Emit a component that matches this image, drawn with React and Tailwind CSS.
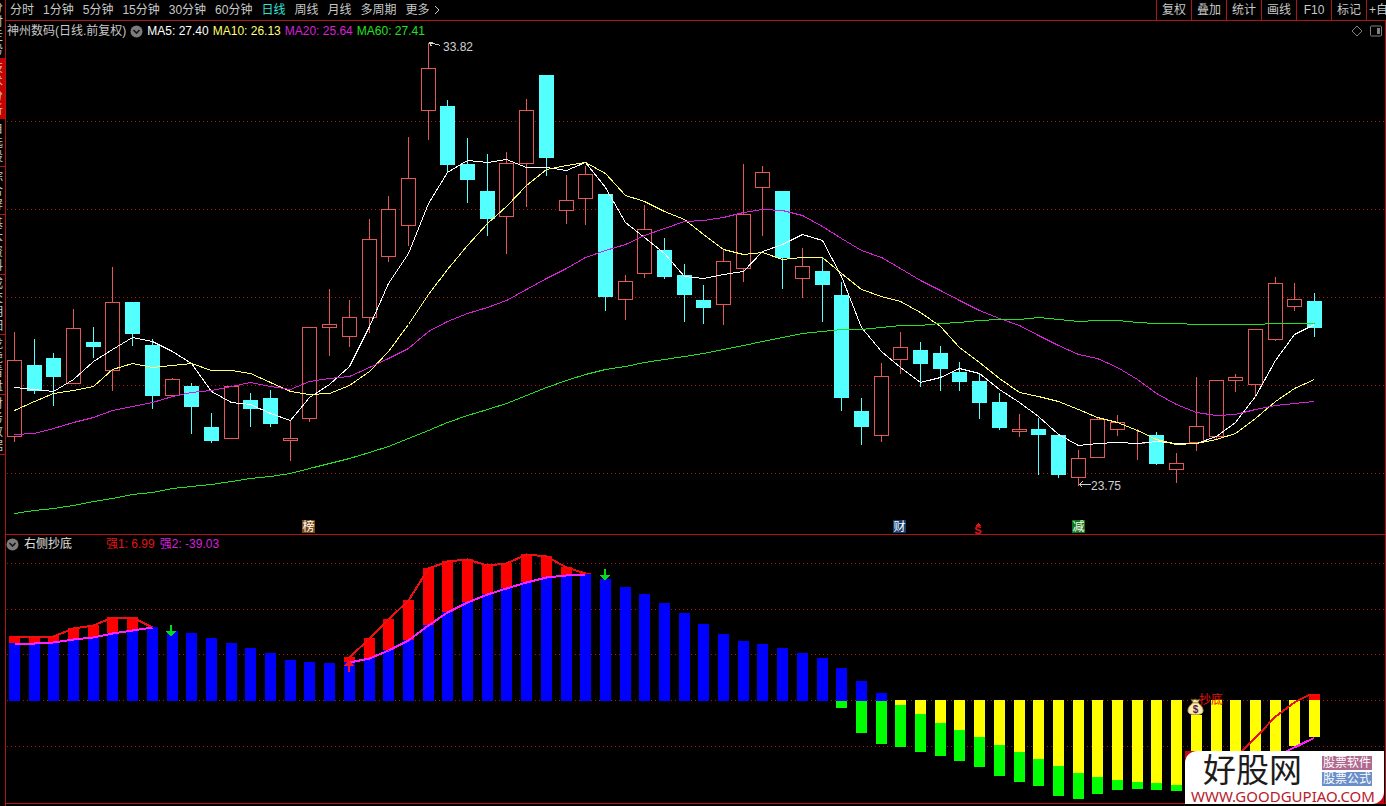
import { useState } from 'react'

const PERIODS = ['分时', '1分钟', '5分钟', '15分钟', '30分钟', '60分钟', '日线', '周线', '月线', '多周期']
const TOOLS = ['复权', '叠加', '统计', '画线', 'F10', '标记']

const SIDE_TABS = [
  { label: '分时走势', cls: 'h-[58px]' },
  { label: '技术分析', cls: 'h-[61px] bg-[#c80000]' },
  { label: '自选股', cls: 'h-[48px] border-b' },
  { label: '综合屏', cls: 'h-[48px] border-b' },
  { label: '基本资料', cls: 'h-[60px] border-b' },
  { label: '成交明细', cls: 'h-[60px] border-b' },
  { label: '龙虎看盘', cls: 'h-[60px] border-b' },
  { label: '财务数据', cls: 'h-[60px] border-b' },
]

// [high, body top, body bottom, low, 1 = up / 0 = down], chart y coordinates
const CANDLES = [
  [332, 360, 436, 442, 1], [339, 365, 391, 394, 0], [353, 358, 377, 406, 0], [309, 328, 383, 384, 1],
  [327, 342, 347, 358, 0], [267, 302, 370, 391, 1], [302, 302, 334, 346, 0], [339, 345, 396, 409, 0],
  [378, 379, 395, 397, 1], [383, 386, 407, 434, 0], [413, 427, 441, 443, 0], [386, 386, 438, 438, 1],
  [393, 400, 409, 427, 0], [390, 398, 424, 427, 0], [421, 438, 440, 461, 1], [327, 327, 418, 422, 1],
  [289, 324, 327, 356, 1], [300, 317, 336, 347, 1], [219, 239, 317, 333, 1], [196, 209, 256, 262, 1],
  [137, 178, 225, 246, 1], [43, 68, 110, 140, 1], [100, 106, 165, 172, 0], [138, 164, 180, 203, 0],
  [154, 191, 219, 236, 0], [152, 163, 216, 254, 1], [99, 110, 163, 207, 1], [75, 75, 158, 176, 0],
  [175, 200, 210, 224, 1], [166, 174, 198, 225, 1], [194, 194, 297, 311, 0], [275, 281, 299, 320, 1],
  [205, 229, 273, 278, 1], [238, 250, 277, 279, 0], [264, 275, 295, 322, 0], [285, 300, 308, 324, 0],
  [250, 261, 304, 325, 1], [164, 214, 268, 282, 1], [166, 172, 187, 236, 1], [191, 191, 258, 289, 0],
  [248, 266, 278, 298, 1], [257, 271, 285, 322, 0], [282, 295, 398, 411, 0], [398, 411, 427, 445, 0],
  [363, 376, 435, 442, 1], [332, 347, 359, 374, 1], [342, 350, 364, 387, 0], [346, 353, 369, 391, 0],
  [362, 372, 382, 391, 0], [373, 381, 403, 419, 0], [393, 402, 428, 430, 0], [414, 429, 431, 437, 1],
  [418, 429, 435, 475, 0], [435, 435, 475, 478, 0], [450, 458, 477, 486, 1], [417, 419, 457, 457, 1],
  [415, 422, 429, 436, 1], [429, 443, 443, 460, 1], [432, 435, 464, 465, 0], [453, 463, 469, 483, 1],
  [377, 426, 442, 451, 1], [380, 380, 436, 440, 1], [374, 377, 380, 392, 1], [329, 329, 384, 397, 1],
  [277, 283, 339, 341, 1], [283, 299, 306, 311, 1], [293, 301, 328, 337, 0],
]

const AVERAGES = [
  {
    color: '#ffffff',
    ys: [387, 389, 391, 379, 361, 349, 337, 341, 351, 363, 391, 402, 404, 413, 420, 397, 384, 366, 326, 283, 253, 203,
      172, 160, 162, 159, 167, 167, 170, 162, 187, 222, 237, 253, 276, 278, 274, 271, 251, 244, 234, 240, 276, 327, 351,
      367, 382, 377, 368, 373, 389, 402, 416, 434, 445, 443, 442, 443, 441, 443, 443, 436, 422, 396, 360, 334, 324],
  },
  {
    color: '#ffff70',
    ys: [410, 401, 393, 390, 386, 369, 363, 367, 365, 363, 370, 370, 373, 382, 391, 394, 393, 385, 371, 351, 324, 294,
      269, 245, 223, 206, 185, 169, 165, 162, 173, 195, 201, 211, 219, 234, 249, 254, 252, 259, 257, 257, 273, 289, 296,
      301, 312, 326, 347, 362, 378, 392, 396, 401, 409, 417, 422, 430, 439, 444, 443, 439, 433, 418, 401, 388, 379],
  },
  {
    color: '#d820d8',
    ys: [434, 433, 428, 422, 417, 410, 406, 402, 396, 392, 390, 386, 382, 386, 389, 381, 378, 376, 367, 358, 348, 331,
      321, 313, 307, 300, 289, 278, 268, 257, 250, 244, 235, 228, 221, 220, 217, 212, 209, 210, 215, 226, 238, 250, 257,
      268, 280, 290, 300, 310, 318, 325, 335, 345, 354, 358, 367, 379, 393, 404, 412, 415, 414, 409, 405, 403, 401],
  },
  {
    color: '#22e022',
    ys: [513, 510, 508, 505, 501, 498, 494, 492, 488, 486, 484, 481, 478, 476, 473, 468, 463, 458, 452, 446, 438, 430,
      422, 415, 409, 403, 395, 387, 380, 374, 369, 366, 362, 359, 356, 353, 349, 345, 341, 337, 333, 331, 329, 329, 327,
      325, 325, 323, 322, 320, 319, 319, 317, 319, 321, 320, 320, 322, 323, 323, 324, 324, 324, 324, 323, 323, 323],
  },
]

const BLUE = [643, 643, 642, 639, 637, 633, 630, 627, 631, 633, 638, 643, 648, 653, 660, 662, 663, 662, 658, 650, 640,
  625, 612, 602, 594, 588, 582, 577, 575, 574, 579, 587, 594, 603, 613, 624, 634, 641, 644, 648, 653, 658, 668, 681, 693]

// strong runs: first bar index and the top of every bar from there on
const RED_RUNS = [
  { start: 0, tops: [636, 636, 636, 628, 625, 617, 617, 627] },
  { start: 17, tops: [657, 638, 619, 600, 568, 561, 559, 565, 563, 554, 556, 567, 573] },
]

// [yellow bottom, green bottom] from bar 42 on
const BELOW = [
  [701, 708], [701, 733], [701, 744], [705, 747], [714, 752], [723, 756], [730, 761], [737, 767], [745, 776],
  [752, 782], [759, 786], [766, 796], [773, 799], [777, 794], [780, 790], [782, 789], [783, 790], [785, 791],
  [785, 790], [782, 786], [778, 778], [772, 772], [760, 760], [746, 746], [737, 737],
]

const cx = (i) => Math.round(14 + (i * 1300) / 66)
const toPoints = (ys, start = 0) => ys.map((y, i) => `${cx(start + i) + 0.5},${y + 0.5}`).join(' ')

const CircleChevron = () => (
  <svg viewBox="0 0 13 13" className="size-[13px] block">
    <circle cx="6.5" cy="6.5" r="6" fill="#7c7c7c" />
    <path d="M3.5 5l3 3 3-3" fill="none" stroke="#151515" strokeWidth="1.6" />
  </svg>
)

const GridLines = ({ ys }) => ys.map((y) => (
  <line key={y} x1="7" x2="1385" y1={y + 0.5} y2={y + 0.5} stroke="#b01410" strokeDasharray="1 3" />
))

const Candle = ({ i, data: [high, top, bottom, low, up] }) => {
  const x = cx(i)
  if (!up) {
    return (
      <g fill="#54ffff">
        <rect x={x} y={high} width="1" height={low - high} />
        <rect x={x - 7} y={top} width="15" height={bottom - top} />
      </g>
    )
  }
  if (top === bottom) {
    return (
      <g fill="#e45858">
        <rect x={x} y={high} width="1" height={low - high} />
        <rect x={x - 7} y={top} width="15" height="1" />
      </g>
    )
  }
  return (
    <g>
      <rect x={x} y={high} width="1" height={low - high} fill="#e45858" />
      <rect x={x - 6.5} y={top + 0.5} width="14" height={bottom - top} fill="#000" stroke="#e45858" />
    </g>
  )
}

const Badge = ({ x, fill, text }) => (
  <g>
    <rect x={x} y="520" width="13" height="13" fill={fill} />
    <text x={x + 6.5} y="531" textAnchor="middle" fontSize="12" fill="#fff">{text}</text>
  </g>
)

const PriceChart = () => (
  <svg viewBox="6 41 1379 493" className="block w-full h-auto" shapeRendering="crispEdges" role="img" aria-label="日线">
    <GridLines ys={[121, 209, 297, 385, 473]} />
    {CANDLES.map((c, i) => <Candle key={i} i={i} data={c} />)}
    {AVERAGES.map((a) => (
      <polyline key={a.color} points={toPoints(a.ys)} fill="none" stroke={a.color} />
    ))}
    <g fill="none" stroke="#d0d0d0">
      <path d="M429.5 42.5l3 0M429.5 42.5l11 3M429.5 42.5l2 4" />
      <path d="M1079.5 484.5h11M1079.5 484.5l3-3M1079.5 484.5l3 3" />
    </g>
    <g fontSize="12" fill="#d0d0d0">
      <text x="443" y="51">33.82</text>
      <text x="1091" y="490">23.75</text>
    </g>
    <Badge x={302} fill="#7a4712" text="榜" />
    <Badge x={893} fill="#123f70" text="财" />
    <Badge x={1072} fill="#0f7412" text="减" />
    <text x="978" y="534" textAnchor="middle" fontSize="11" fontWeight="bold" fill="#e01818">S</text>
    <path d="M975 526l3-3 3 3z" fill="#e01818" />
  </svg>
)

const MoneyBag = () => (
  <g shapeRendering="auto">
    <rect x="1188" y="699" width="16" height="16" fill="#000" />
    <path d="M1191 699l2 1 2-1 2 1 3-1-2 4h-5z" fill="#f4e6a0" stroke="#6a5020" strokeWidth="1" />
    <path d="M1193 703h5c3 2 5 5 5 7.500c0 3-2 4-7.500 4s-7.500-1-7.500-4c0-2.500 2-5.500 5-7.500z" fill="#f8edb0" stroke="#c8a850" strokeWidth="1" />
    <text x="1195.500" y="713" textAnchor="middle" fontSize="10" fontWeight="bold" fill="#5a1848">$</text>
  </g>
)

const IndicatorChart = () => (
  <svg viewBox="6 553 1379 250" className="block w-full h-auto" shapeRendering="crispEdges" role="img" aria-label="右侧抄底">
    <GridLines ys={[563, 609, 654, 700, 746]} />
    {RED_RUNS.map(({ start, tops }) => tops.map((y, i) => (
      <rect key={start + i} x={cx(start + i) - 5} y={y} width="11" height={701 - y} fill="#ff0000" />
    )))}
    {BLUE.map((y, i) => <rect key={i} x={cx(i) - 5} y={y} width="11" height={701 - y} fill="#0000ff" />)}
    {BELOW.map(([yellow, green], i) => {
      const x = cx(42 + i) - 5
      return (
        <g key={i}>
          {yellow > 701 && <rect x={x} y="700" width="11" height={yellow - 700} fill="#ffff00" />}
          <rect x={x} y={yellow} width="11" height={green - yellow} fill="#00ff00" />
        </g>
      )
    })}
    <rect x="1309" y="694" width="11" height="6" fill="#ff0000" />
    <g fill="none" strokeWidth="2">
      {RED_RUNS.map(({ start, tops }) => (
        <polyline key={start} points={toPoints(tops, start)} stroke="#f01010" />
      ))}
      <polyline points="1236,757 1242,751 1260,733 1275,717 1295,702 1309,695 1319,695" stroke="#e81010" />
      <polyline points={toPoints(BLUE.slice(0, 8))} stroke="#ff20ff" />
      <polyline points={toPoints(BLUE.slice(17, 30), 17)} stroke="#ff20ff" />
      <polyline points="1275,757 1287,751 1314,738" stroke="#ff20ff" />
    </g>
    <g fill="#00dc1e">
      <path d="M170 625h2v6h4l-5 6l-5-6h4z" />
      <path d="M604 569h2v6h4l-5 6l-5-6h4z" />
    </g>
    <path d="M348 672h2v-6h4l-5-6l-5 6h4z" fill="#ff1020" />
    <MoneyBag />
    <text x="1199" y="704" fontSize="12" fill="#e81010">抄底</text>
  </svg>
)

const Watermark = () => (
  <a href="#" className="absolute right-[2px] bottom-[2px] block bg-[#c80810] z-10">
    <div className="w-[199px] h-[53px] bg-white rounded-tl-[12px] rounded-br-[12px] px-[6px] flex flex-col overflow-hidden">
      <div className="flex items-center justify-between pl-[12px] pr-[6px]">
        <span className="text-[33px] leading-[40px] text-[#1c1c1c]">好股网</span>
        <span className="flex flex-col gap-[2px] text-[12px] leading-[14px] text-white">
          <span className="bg-[#b06a90] px-[1px]">股票软件</span>
          <span className="bg-[#6a8ec8] px-[1px]">股票公式</span>
        </span>
      </div>
      <span className="text-[15px] leading-[11px] text-[#b8202c] whitespace-nowrap font-['Noto_Sans',sans-serif]">WWW.GOODGUPIAO.COM</span>
    </div>
  </a>
)

export default function App() {
  const [period, setPeriod] = useState('日线')

  return (
    <div className="relative min-h-screen bg-black text-[#c8c8c8] flex overflow-hidden text-[12px] leading-[16px] font-['Liberation_Sans','Noto_Sans_CJK_SC',sans-serif]">
      <nav className="w-[5px] shrink-0 overflow-hidden flex flex-col items-end">
        {SIDE_TABS.map((t) => (
          <button key={t.label} className={`w-full shrink-0 flex justify-end items-center border-[#b01414] leading-[14px] pr-[2px] ${t.cls}`}>
            <span className="w-3 shrink-0 break-all">{t.label}</span>
          </button>
        ))}
      </nav>

      <main className="flex-1 min-w-0 border-l border-[#b01414]">
        <header className="h-[21px] flex justify-between border-b border-[#b01414]">
          <div className="flex items-center gap-[9px] pl-1 whitespace-nowrap">
            {PERIODS.map((p) => (
              <button key={p} onClick={() => setPeriod(p)} className={p === period ? 'text-[#30e0d8]' : ''}>{p}</button>
            ))}
            <button className="flex items-center gap-1">
              更多
              <svg viewBox="0 0 6 10" className="w-[6px] h-[10px]"><path d="M1 1l4 4-4 4" fill="none" stroke="#c8c8c8" /></svg>
            </button>
          </div>
          <div className="flex">
            {TOOLS.map((t) => (
              <button key={t} className="w-[35px] border-l border-[#b01414]">{t}</button>
            ))}
            <button className="w-5 border-l border-[#b01414] pl-[2px] overflow-hidden whitespace-nowrap text-left">+自</button>
          </div>
        </header>

        <section className="border-r border-b border-[#b01414]">
          <div className="h-5 flex items-center justify-between px-[1px] whitespace-nowrap">
            <div className="flex items-center gap-1">
              <span>神州数码(日线.前复权)</span>
              <button aria-label="展开"><CircleChevron /></button>
              <span className="text-white">MA5: 27.40</span>
              <span className="text-[#ffff70]">MA10: 26.13</span>
              <span className="text-[#d820d8]">MA20: 25.64</span>
              <span className="text-[#22e022]">MA60: 27.41</span>
            </div>
            <div className="flex items-center gap-[7px] pr-[2px]">
              <svg viewBox="0 0 12 12" className="size-3"><path d="M6 1l5 5-5 5-5-5z" fill="none" stroke="#808080" /></svg>
              <svg viewBox="0 0 12 12" className="size-3">
                <rect x="0.5" y="1" width="11" height="10" rx="1" fill="none" stroke="#808080" />
                <rect x="7" y="3" width="3" height="6" fill="#808080" />
              </svg>
            </div>
          </div>
          <PriceChart />
        </section>

        <section className="border-r border-b border-[#b01414]">
          <div className="h-[18px] flex items-center whitespace-nowrap">
            <button aria-label="展开"><CircleChevron /></button>
            <span className="pl-[5px] text-[#e0e0e0]">右侧抄底</span>
            <span className="pl-[34px] text-[#e01818]">强1: 6.99</span>
            <span className="pl-[5px] text-[#d820d8]">强2: -39.03</span>
          </div>
          <IndicatorChart />
        </section>
      </main>

      <Watermark />
    </div>
  )
}
